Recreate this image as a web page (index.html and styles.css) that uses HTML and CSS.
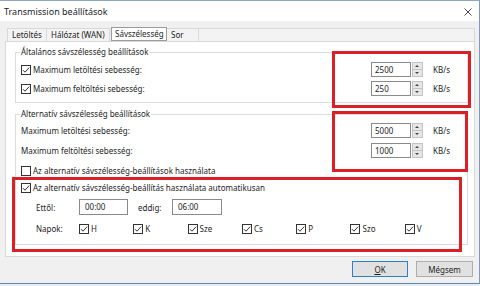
FILE: index.html
```html
<!DOCTYPE html>
<html lang="hu">
<head>
    <meta charset="UTF-8">
    <title>Transmission beállítások</title>
    <link rel="stylesheet" href="styles.css">
</head>
<body>
    <div class="window">
        <div class="titlebar">
            <span class="title">Transmission beállítások</span>
            <svg class="close" width="8" height="8" viewBox="0 0 8 8"><path d="M0.5 0.5L7.5 7.5M7.5 0.5L0.5 7.5" stroke="#333" stroke-width="0.9"/></svg>
        </div>
        <div class="body">
            <div class="tabs">
                <div class="tab t1">Letöltés</div>
                <div class="tab t2">Hálózat (WAN)</div>
                <div class="tab active">Sávszélesség</div>
                <div class="tab t4">Sor</div>
                <div class="tab-fill"></div>
            </div>
            <div class="panel">
                <div class="group g1">
                    <div class="legend">Általános sávszélesség beállítások</div>
                    <div class="row r1">
                        <label class="check"><svg class="box" width="10" height="10" viewBox="0 0 10 10"><rect x="0.5" y="0.5" width="9" height="9" fill="#fff" stroke="#333"/><path d="M2 5.2L4 7.2L8.2 2.6" fill="none" stroke="#333" stroke-width="1"/></svg>Maximum letöltési sebesség:</label>
                        <div class="rate"><span class="field">2500</span><span class="spin"><i class="up"></i><i class="down"></i></span><span class="unit">KB/s</span></div>
                    </div>
                    <div class="row r2">
                        <label class="check"><svg class="box" width="10" height="10" viewBox="0 0 10 10"><rect x="0.5" y="0.5" width="9" height="9" fill="#fff" stroke="#333"/><path d="M2 5.2L4 7.2L8.2 2.6" fill="none" stroke="#333" stroke-width="1"/></svg>Maximum feltöltési sebesség:</label>
                        <div class="rate"><span class="field">250</span><span class="spin"><i class="up"></i><i class="down"></i></span><span class="unit">KB/s</span></div>
                    </div>
                </div>
                <div class="group g2">
                    <div class="legend">Alternatív sávszélesség beállítások</div>
                    <div class="row r1">
                        <span class="label">Maximum letöltési sebesség:</span>
                        <div class="rate"><span class="field">5000</span><span class="spin"><i class="up"></i><i class="down"></i></span><span class="unit">KB/s</span></div>
                    </div>
                    <div class="row r2">
                        <span class="label">Maximum feltöltési sebesség:</span>
                        <div class="rate"><span class="field">1000</span><span class="spin"><i class="up"></i><i class="down"></i></span><span class="unit">KB/s</span></div>
                    </div>
                    <label class="check line use-alt"><svg class="box" width="10" height="10" viewBox="0 0 10 10"><rect x="0.5" y="0.5" width="9" height="9" fill="#fff" stroke="#333"/></svg>Az alternatív sávszélesség-beállítások használata</label>
                    <label class="check line auto"><svg class="box" width="10" height="10" viewBox="0 0 10 10"><rect x="0.5" y="0.5" width="9" height="9" fill="#fff" stroke="#333"/><path d="M2 5.2L4 7.2L8.2 2.6" fill="none" stroke="#333" stroke-width="1"/></svg>Az alternatív sávszélesség-beállítás használata automatikusan</label>
                    <div class="times">
                        <span class="tlabel">Ettől:</span>
                        <span class="field time">00:00</span>
                        <span class="until">eddig:</span>
                        <span class="field time wide">06:00</span>
                    </div>
                    <div class="days">
                        <span class="tlabel">Napok:</span>
                        <label class="check day"><svg class="box" width="10" height="10" viewBox="0 0 10 10"><rect x="0.5" y="0.5" width="9" height="9" fill="#fff" stroke="#333"/><path d="M2 5.2L4 7.2L8.2 2.6" fill="none" stroke="#333" stroke-width="1"/></svg>H</label>
                        <label class="check day"><svg class="box" width="10" height="10" viewBox="0 0 10 10"><rect x="0.5" y="0.5" width="9" height="9" fill="#fff" stroke="#333"/><path d="M2 5.2L4 7.2L8.2 2.6" fill="none" stroke="#333" stroke-width="1"/></svg>K</label>
                        <label class="check day"><svg class="box" width="10" height="10" viewBox="0 0 10 10"><rect x="0.5" y="0.5" width="9" height="9" fill="#fff" stroke="#333"/><path d="M2 5.2L4 7.2L8.2 2.6" fill="none" stroke="#333" stroke-width="1"/></svg>Sze</label>
                        <label class="check day"><svg class="box" width="10" height="10" viewBox="0 0 10 10"><rect x="0.5" y="0.5" width="9" height="9" fill="#fff" stroke="#333"/><path d="M2 5.2L4 7.2L8.2 2.6" fill="none" stroke="#333" stroke-width="1"/></svg>Cs</label>
                        <label class="check day"><svg class="box" width="10" height="10" viewBox="0 0 10 10"><rect x="0.5" y="0.5" width="9" height="9" fill="#fff" stroke="#333"/><path d="M2 5.2L4 7.2L8.2 2.6" fill="none" stroke="#333" stroke-width="1"/></svg>P</label>
                        <label class="check day"><svg class="box" width="10" height="10" viewBox="0 0 10 10"><rect x="0.5" y="0.5" width="9" height="9" fill="#fff" stroke="#333"/><path d="M2 5.2L4 7.2L8.2 2.6" fill="none" stroke="#333" stroke-width="1"/></svg>Szo</label>
                        <label class="check day"><svg class="box" width="10" height="10" viewBox="0 0 10 10"><rect x="0.5" y="0.5" width="9" height="9" fill="#fff" stroke="#333"/><path d="M2 5.2L4 7.2L8.2 2.6" fill="none" stroke="#333" stroke-width="1"/></svg>V</label>
                    </div>
                </div>
            </div>
            <div class="buttons">
                <button class="btn default"><u>O</u>K</button>
                <button class="btn">Mégsem</button>
            </div>
        </div>
        <div class="mark m1"></div>
        <div class="mark m2"></div>
        <div class="mark m3"></div>
    </div>
</body>
</html>
```

FILE: styles.css
```css
body {
    margin: 0;
    width: 480px;
    height: 286px;
    overflow: hidden;
    background: #e9edf2;
    font-family: "Noto Sans", "Open Sans", sans-serif;
    font-size: 8px;
    color: #1e1e1e;
}
.window {
    position: relative;
    box-sizing: border-box;
    width: 480px;
    height: 284px;
    background: #f0f0f0;
    border-top: 1px solid #8fa9c4;
    border-right: 1px solid #7f9ab8;
    border-bottom: 1px solid #5d86b3;
}
.titlebar {
    height: 20px;
    background: #fff;
    display: flex;
    align-items: center;
    justify-content: space-between;
    padding: 0 7px 0 4px;
}
.title {
    font-size: 9px;
}
.close {
    margin-top: 1px;
}
.body {
    padding: 6px 4px 0 5px;
}
.tabs {
    display: flex;
    align-items: flex-end;
    height: 14px;
    padding-left: 2px;
}
.tab {
    box-sizing: border-box;
    height: 13px;
    line-height: 12px;
    padding-left: 4px;
    border: 1px solid #d9d9d9;
    border-bottom: none;
    background: #f3f3f3;
    white-space: nowrap;
}
.t1 { width: 40px; }
.t2 { width: 63px; border-left: none; }
.t4 { width: 32px; border-left: none; }
.tab.active {
    height: 14px;
    width: 56px;
    line-height: 12px;
    padding-left: 3px;
    background: #fff;
    border: 1px solid #9a9a9a;
    margin: 0 0 0 1px;
}
.tab-fill {
    flex: 1;
    box-sizing: border-box;
    height: 13px;
    border-top: 1px solid #d9d9d9;
    border-right: 1px solid #d9d9d9;
    background: #f3f3f3;
}
.panel {
    box-sizing: border-box;
    width: 470px;
    height: 216px;
    background: #fff;
    border: 1px solid #d9d9d9;
    padding-top: 10px;
}
.group {
    border: 1px solid #dcdcdc;
    margin: 0 6px 0 9px;
    padding: 0 0 0 5px;
}
.g1 {
    padding-bottom: 6px;
}
.g2 {
    margin-top: 11px;
    padding-bottom: 9px;
}
.legend {
    display: table;
    margin: -6px 0 0 -1px;
    padding: 0 1px;
    height: 10px;
    line-height: 10px;
    background: #fff;
}
.row {
    display: flex;
    align-items: center;
    justify-content: space-between;
    height: 15px;
}
.g1 .r1 { margin-top: 5px; }
.g1 .r2 { margin-top: 4px; }
.g2 .r1 { margin-top: 4px; }
.g2 .r2 { margin-top: 5px; }
.check {
    display: flex;
    align-items: center;
    white-space: nowrap;
}
.box {
    flex: none;
    margin-right: 2px;
}
.line {
    height: 13px;
}
.use-alt { margin-top: 6px; }
.auto { margin-top: 4px; }
.rate {
    display: flex;
    align-items: center;
}
.field {
    box-sizing: border-box;
    display: block;
    width: 40px;
    height: 15px;
    line-height: 13px;
    padding-left: 3px;
    border: 1px solid #8a8a8a;
    background: #fff;
}
.spin {
    box-sizing: border-box;
    display: flex;
    flex-direction: column;
    width: 11px;
    height: 15px;
    margin-left: 1px;
    border: 1px solid #c4c4c4;
    background: #e6e6e6;
}
.spin i {
    flex: 1;
    position: relative;
}
.spin .up {
    border-bottom: 1px solid #c4c4c4;
}
.spin i::after {
    content: "";
    position: absolute;
    left: 2px;
    border-left: 2.5px solid transparent;
    border-right: 2.5px solid transparent;
}
.spin .up::after {
    top: 2px;
    border-bottom: 2px solid #444;
}
.spin .down::after {
    top: 2px;
    border-top: 2px solid #444;
}
.unit {
    width: 34px;
    margin-left: 10px;
}
.times {
    display: flex;
    align-items: center;
    height: 16px;
    margin-top: 5px;
    padding-left: 15px;
}
.tlabel {
    width: 43px;
}
.field.time {
    width: 49px;
    height: 16px;
    line-height: 14px;
    padding-left: 5px;
}
.field.wide {
    width: 50px;
}
.until {
    width: 34px;
    margin-left: 10px;
}
.days {
    display: flex;
    align-items: center;
    height: 13px;
    margin-top: 7px;
    padding-left: 15px;
}
.day {
    width: 54.3px;
}
.buttons {
    display: flex;
    justify-content: flex-end;
    gap: 8px;
    margin-top: 4px;
    padding-right: 2px;
}
.btn {
    box-sizing: border-box;
    width: 57px;
    height: 16px;
    padding: 0;
    font-family: inherit;
    font-size: 8px;
    color: #1e1e1e;
    background: #e1e1e1;
    border: 1px solid #adadad;
}
.btn.default {
    width: 56px;
    border-color: #2a7fd0;
}
.mark {
    position: absolute;
    box-sizing: border-box;
    border: 3px solid #dc1f27;
}
.m1 { left: 332px; top: 50px; width: 139px; height: 57px; }
.m2 { left: 332px; top: 110px; width: 136px; height: 61px; }
.m3 { left: 12px; top: 176px; width: 450px; height: 75px; }
```
